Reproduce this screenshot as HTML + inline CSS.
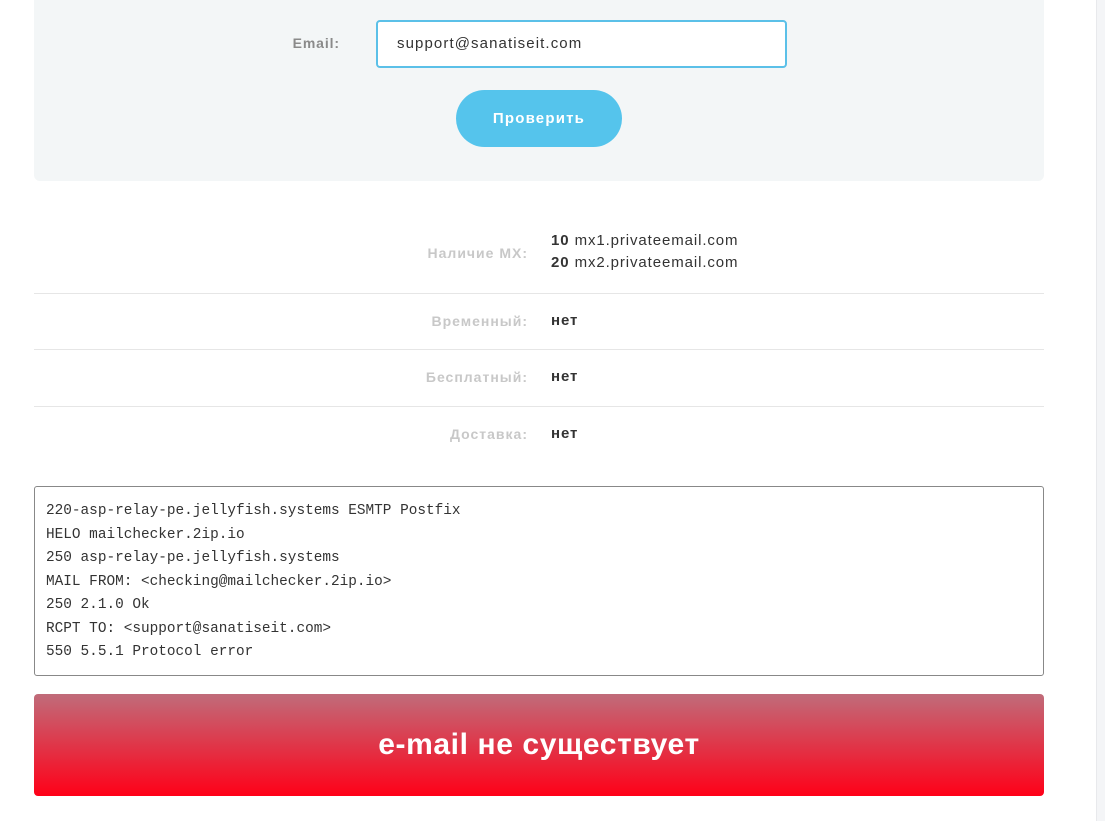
<!DOCTYPE html>
<html><head><meta charset="utf-8"><style>
body{margin:0;width:1105px;height:821px;background:#fff;font-family:"Liberation Sans",sans-serif;position:relative;overflow:hidden}
.abs{position:absolute}
.panel{left:34px;top:-10px;width:1010px;height:191px;background:#f3f6f7;border-radius:6px}
.lbl{right:765px;top:35px;font-size:14px;font-weight:bold;color:#8a8a8a;letter-spacing:0.9px}
.inp{left:376px;top:20px;width:407px;height:44px;border:2px solid #5bc0e8;border-radius:4px;background:#fff}
.inp span{position:absolute;left:19px;top:13px;font-size:15px;color:#333;letter-spacing:1.1px}
.btn{left:456px;top:90px;width:166px;height:57px;border-radius:29px;background:#55c4ec;color:#fff;font-weight:bold;font-size:15px;text-align:center;line-height:57px;letter-spacing:1.2px}
.line{left:34px;width:1010px;height:1px;background:#e6e6e6}
.k{right:577px;font-size:14px;font-weight:bold;color:#c8c8c8;letter-spacing:1px}
.v{left:551px;font-size:15px;font-weight:bold;color:#333;letter-spacing:0.9px}
.log{left:34px;top:486px;width:1008px;height:188px;border:1px solid #888;border-radius:3px}
.log pre{margin:0;position:absolute;left:11px;top:13px;font-family:"Liberation Mono",monospace;font-size:14.4px;line-height:23.5px;color:#333}
.red{left:34px;top:694px;width:1010px;height:102px;border-radius:4px;background:linear-gradient(#c06c7a,#ff0018);color:#fff;font-size:30px;font-weight:bold;text-align:center;line-height:102px;letter-spacing:0.6px}
.sb{left:1096px;top:0;width:9px;height:821px;background:#f4f5f7;border-left:1px solid #e8e9ec}
</style></head><body>
<div class="abs panel"></div>
<div class="abs lbl">Email:</div>
<div class="abs inp"><span>support@sanatiseit.com</span></div>
<div class="abs btn">Проверить</div>
<div class="abs k" style="top:245px">Наличие MX:</div>
<div class="abs v" style="top:232px">10 <span style="font-weight:normal">mx1.privateemail.com</span></div>
<div class="abs v" style="top:254px">20 <span style="font-weight:normal">mx2.privateemail.com</span></div>
<div class="abs line" style="top:293px"></div>
<div class="abs k" style="top:313px">Временный:</div>
<div class="abs v" style="top:312px">нет</div>
<div class="abs line" style="top:349px"></div>
<div class="abs k" style="top:369px">Бесплатный:</div>
<div class="abs v" style="top:368px">нет</div>
<div class="abs line" style="top:406px"></div>
<div class="abs k" style="top:426px">Доставка:</div>
<div class="abs v" style="top:425px">нет</div>
<div class="abs log"><pre>220-asp-relay-pe.jellyfish.systems ESMTP Postfix
HELO mailchecker.2ip.io
250 asp-relay-pe.jellyfish.systems
MAIL FROM: &lt;checking@mailchecker.2ip.io&gt;
250 2.1.0 Ok
RCPT TO: &lt;support@sanatiseit.com&gt;
550 5.5.1 Protocol error</pre></div>
<div class="abs red">e-mail не существует</div>
<div class="abs sb"></div>
</body></html>
